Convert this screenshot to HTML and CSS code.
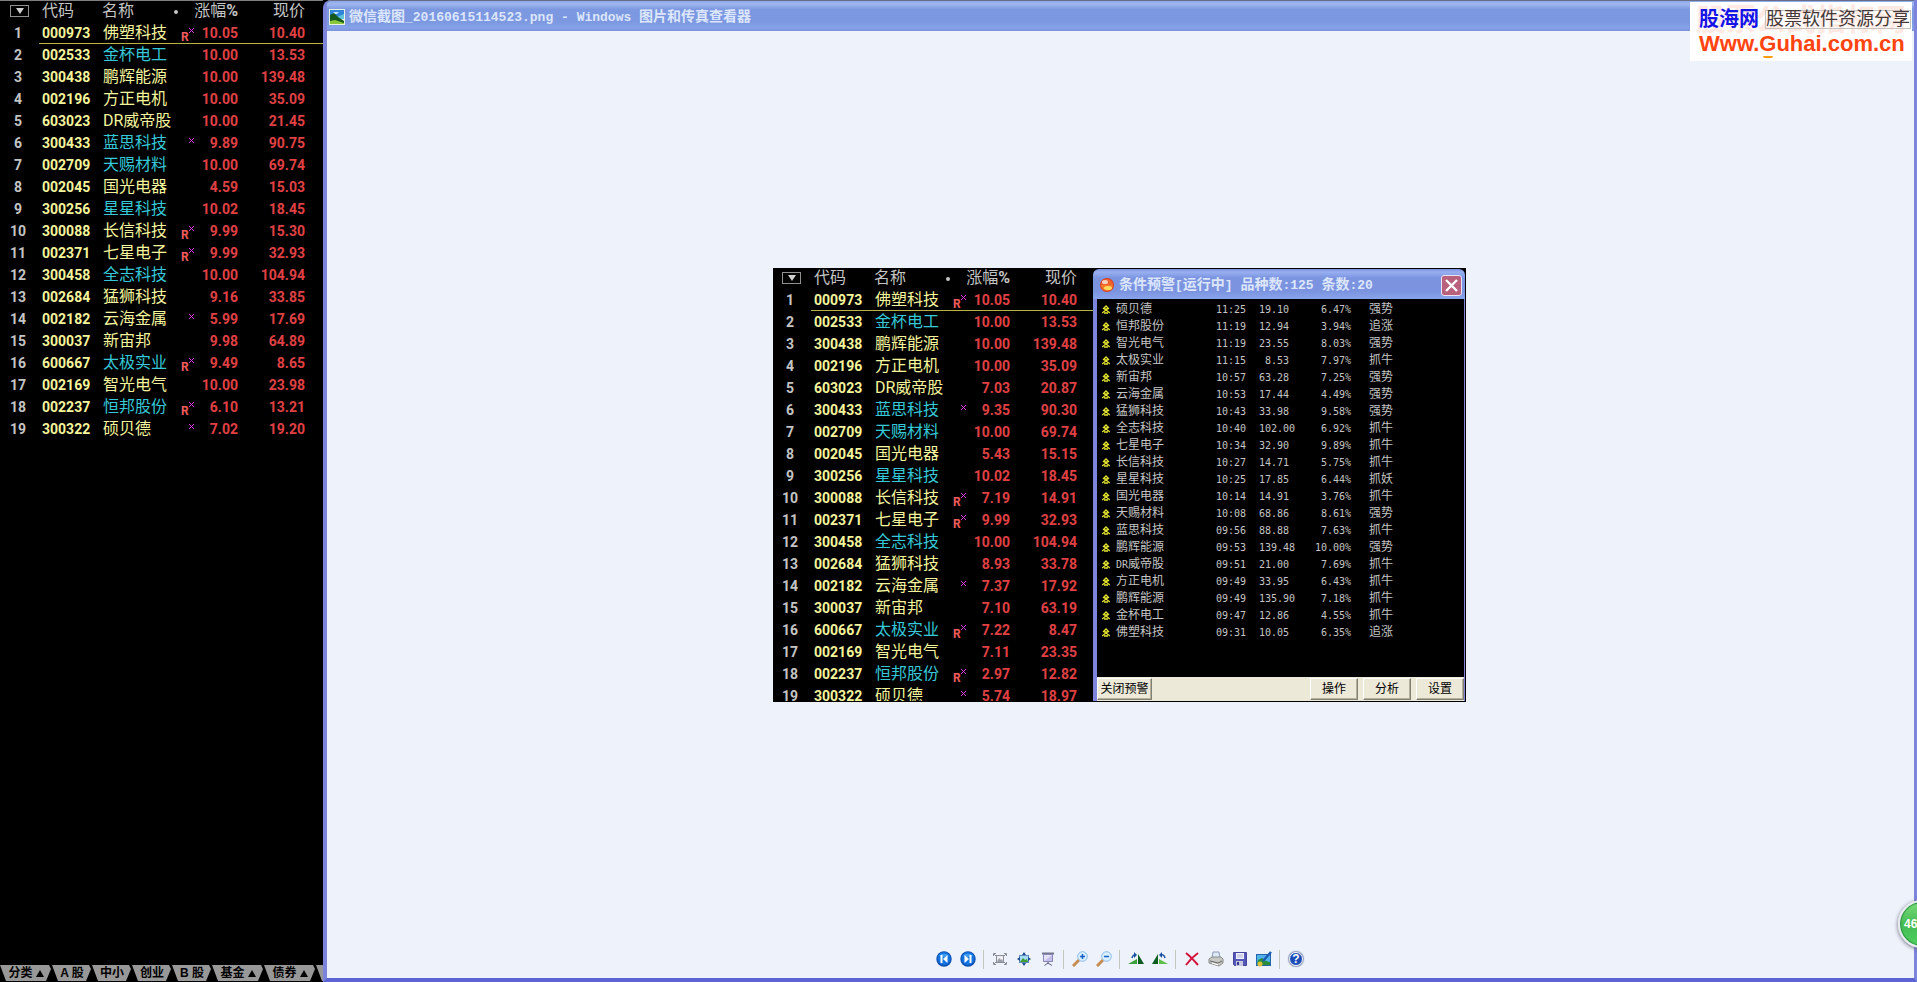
FILE: index.html
```html
<!DOCTYPE html>
<html lang="zh-CN">
<head>
    <meta charset="UTF-8">
    <meta name="viewport" content="width=device-width, initial-scale=1.0">
    <title>微信截图_20160615114523.png - Windows 图片和传真查看器</title>
    <link rel="stylesheet" href="styles.css">
</head>
<body>
    <!-- Stock list -->
    <div class="market">
        <table class="quotes" id="quotesNow"></table>
        <div class="tabs">
            <button type="button" class="tab wide">分类<i></i></button>
            <button type="button" class="tab">A 股</button>
            <button type="button" class="tab">中小</button>
            <button type="button" class="tab">创业</button>
            <button type="button" class="tab">B 股</button>
            <button type="button" class="tab wide">基金<i></i></button>
            <button type="button" class="tab wide">债券<i></i></button>
            <span class="tab-rest"></span>
        </div>
    </div>

    <!-- Picture viewer -->
    <div class="viewer">
        <div class="titlebar">
            <svg class="title-icon" width="16" height="16" viewBox="0 0 16 16">
                <rect width="16" height="16" fill="#e8f2e0"/>
                <rect x="1" y="1" width="14" height="7" fill="#2f86d8"/>
                <path d="M5 3h5l-2 2H4z" fill="#bfe4fa"/>
                <path d="M8 8l7-3v5H8z" fill="#5ec4dc"/>
                <path d="M1 6l4-2 4 4 6 4v2H1z" fill="#14591f"/>
                <path d="M1 12l5-1 9 3v1H1z" fill="#8cc63c"/>
            </svg>
            <h1>微信截图<span>_20160615114523.png - Windows </span>图片和传真查看器</h1>
        </div>

        <div class="client">
            <div class="shot">
                <div class="shot-list">
                    <table class="quotes" id="quotesShot"></table>
                </div>
                <div class="alert">
                    <div class="alert-title">
                        <svg width="14" height="14" viewBox="0 0 14 14">
                            <circle cx="7" cy="7" r="7" fill="#d8401c"/>
                            <path d="M1 7a6 6 0 0 1 12 0z" fill="#f0622c"/>
                            <path d="M1 7a6 6 0 0 0 12 0z" fill="#f47a28"/>
                            <ellipse cx="8" cy="10" rx="4" ry="2" fill="#ffd860"/>
                            <ellipse cx="5" cy="4" rx="3" ry="2" fill="#fff" opacity=".7"/>
                        </svg>
                        <h2>条件预警<span>[</span>运行中<span>] </span>品种数<span>:125 </span>条数<span>:20</span></h2>
                        <button type="button" class="close" aria-label="关闭">
                            <svg width="13" height="13" viewBox="0 0 13 13"><path d="M1 1l11 11M12 1L1 12" stroke="#fff" stroke-width="2.4"/></svg>
                        </button>
                    </div>
                    <div class="alert-body">
                        <table class="alerts" id="alerts"></table>
                    </div>
                    <div class="alert-buttons">
                        <button type="button" class="close-alert">关闭预警</button>
                        <button type="button">操作</button>
                        <button type="button">分析</button>
                        <button type="button">设置</button>
                    </div>
                </div>
            </div>
        </div>

        <div class="toolbar">
            <button type="button" aria-label="上一个">
                <svg width="16" height="16" viewBox="0 0 16 16"><circle cx="8" cy="8" r="7.7" fill="#0a4fb4"/><circle cx="8" cy="7.5" r="6.5" fill="#1474e0"/><path d="M3 5a6 5 0 0 1 10 0 9 6 0 0 1-10 0z" fill="#3c9cf0"/><path d="M5.5 4v8" stroke="#fff" stroke-width="2"/><path d="M11.5 4v8L7 8z" fill="#fff"/></svg>
            </button>
            <button type="button" aria-label="下一个">
                <svg width="16" height="16" viewBox="0 0 16 16"><circle cx="8" cy="8" r="7.7" fill="#0a4fb4"/><circle cx="8" cy="7.5" r="6.5" fill="#1474e0"/><path d="M3 5a6 5 0 0 1 10 0 9 6 0 0 1-10 0z" fill="#3c9cf0"/><path d="M10.5 4v8" stroke="#fff" stroke-width="2"/><path d="M4.5 4v8L9 8z" fill="#fff"/></svg>
            </button>
            <span class="sep"></span>
            <button type="button" aria-label="最合适">
                <svg width="16" height="16" viewBox="0 0 16 16" fill="none" stroke="#8a8e98"><path d="M1.500 5V2.500H4M12 2.500h2.500V5M1.500 11v2.500H4M12 13.500h2.500V11M2 3l2 2M14 3l-2 2M2 13l2-2M14 13l-2-2"/><rect x="4.5" y="4.5" width="7" height="7" fill="#eceef2"/><path d="M5 11l2-4 2 2 1-1 1 3z" fill="#9a9ea8" stroke="none"/></svg>
            </button>
            <button type="button" aria-label="实际大小">
                <svg width="16" height="16" viewBox="0 0 16 16"><rect x="3.5" y="4.5" width="9" height="7" fill="#a6dcf4" stroke="#5c8cc0"/><path d="M4 11l3-4 2 2 2-1 1 3z" fill="#3e9c30"/><path d="M8 1l2 3H6zM8 15l2-3H6zM1 8l3-2v4zM15 8l-3-2v4z" fill="#1c4c94"/></svg>
            </button>
            <button type="button" aria-label="幻灯片">
                <svg width="16" height="16" viewBox="0 0 16 16"><path d="M2 2.500h12" stroke="#70748c" stroke-width="2"/><rect x="3.5" y="3.5" width="9" height="7" fill="#e4e2f8" stroke="#8c88b8"/><path d="M4 10l8-6v6z" fill="#c4c0ec"/><path d="M8 11v2M4.500 14.500L8 12l4 2.500" stroke="#5c5c84" fill="none"/></svg>
            </button>
            <span class="sep"></span>
            <button type="button" aria-label="放大">
                <svg width="16" height="16" viewBox="0 0 16 16"><path d="M1 15l6-6" stroke="#c88c50" stroke-width="3"/><circle cx="10.5" cy="5.5" r="4.8" fill="#d8f0ff" stroke="#8cb8e4"/><path d="M8 5.500h5M10.500 3v5" stroke="#1860c8" stroke-width="1.5"/></svg>
            </button>
            <button type="button" aria-label="缩小">
                <svg width="16" height="16" viewBox="0 0 16 16"><path d="M1 15l6-6" stroke="#c88c50" stroke-width="3"/><circle cx="10.5" cy="5.5" r="4.8" fill="#d8f0ff" stroke="#8cb8e4"/><path d="M8 5.500h5" stroke="#1860c8" stroke-width="1.5"/></svg>
            </button>
            <span class="sep"></span>
            <button type="button" aria-label="顺时针旋转">
                <svg width="16" height="16" viewBox="0 0 16 16"><path d="M0 13l9-5v5z" fill="#3ca03c"/><path d="M10 13V3l6 10z" fill="#0c5c20"/><path d="M4 7q1-4 4-3" stroke="#1c50a0" stroke-width="1.5" fill="none"/><path d="M6 1l3 3-3 3z" fill="#1c50a0"/></svg>
            </button>
            <button type="button" aria-label="逆时针旋转">
                <svg width="16" height="16" viewBox="0 0 16 16"><path d="M16 13L7 8v5z" fill="#5cc048"/><path d="M6 13V3L0 13z" fill="#0c5c20"/><path d="M13 7q-1-4-4-3" stroke="#1c50a0" stroke-width="1.5" fill="none"/><path d="M10 1L7 4l3 3z" fill="#1c50a0"/></svg>
            </button>
            <span class="sep"></span>
            <button type="button" aria-label="删除">
                <svg width="16" height="16" viewBox="0 0 16 16"><path d="M2 2q5 4 12 12M14 2Q7 7 2 14" stroke="#d4143c" stroke-width="2" fill="none"/></svg>
            </button>
            <button type="button" aria-label="打印">
                <svg width="16" height="16" viewBox="0 0 16 16"><path d="M4 7l1-6h6l1 6z" fill="#dceafa" stroke="#8c9cb4"/><path d="M1 8l3-2h9l2 2v4l-4 3-10-3z" fill="#c8c8c4" stroke="#888884"/><path d="M2 10l8 2 4-2" stroke="#606068" fill="none"/><path d="M4 12l6 2" stroke="#fff"/></svg>
            </button>
            <button type="button" aria-label="复制到">
                <svg width="16" height="16" viewBox="0 0 16 16"><path d="M1.500 1.500h13v13h-12l-1-1z" fill="#5458b4" stroke="#4444a0"/><rect x="4" y="2" width="8" height="6" fill="#f0f2fc"/><path d="M5 4h6M5 6h6" stroke="#b0b4d4"/><rect x="4" y="10" width="7" height="5" fill="#c4c8e0"/><rect x="5" y="11" width="2" height="3" fill="#34348c"/></svg>
            </button>
            <button type="button" aria-label="编辑">
                <svg width="16" height="16" viewBox="0 0 16 16"><rect x=".5" y="3.5" width="14" height="11" fill="#50b4ec" stroke="#2464ac"/><path d="M1 14l1-5 4-2 4 3 4 1v3z" fill="#2c8c38"/><path d="M7 10l8-9" stroke="#1c5cb4" stroke-width="2.5"/><circle cx="4" cy="13" r="2.5" fill="#dcc040"/></svg>
            </button>
            <span class="sep"></span>
            <button type="button" class="help" aria-label="帮助">?</button>
        </div>
    </div>

    <!-- Site mark -->
    <div class="mark">
        <div class="ghost" aria-hidden="true">股票公式指标网</div>
        <div class="mark-top"><b>股海网</b><span>股票软件资源分享</span></div>
        <a href="#">Www.Guhai.com.cn</a>
    </div>

    <div class="ball">46</div>

    <script src="script.js"></script>
</body>
</html>
```
FILE: styles.css
```css
/* General styling */
* {
    box-sizing: border-box;
}

body {
    display: flex;
    position: relative;
    height: 100vh;
    margin: 0;
    overflow: hidden;
    background-color: #000;
    font-family: "Liberation Sans", "Noto Sans CJK SC", sans-serif;
    font-size: 12px;
}

button {
    margin: 0;
    padding: 0;
    border: none;
    background: none;
    font-family: inherit;
    font-size: 12px;
    cursor: pointer;
}

table {
    border-collapse: separate;
    border-spacing: 0;
    table-layout: fixed;
}

th,
td {
    padding: 0;
    font-weight: normal;
    text-align: left;
    white-space: nowrap;
}

/* Stock list */
.market {
    display: flex;
    flex: none;
    flex-direction: column;
    justify-content: space-between;
    width: 323px;
    border-top: 1px solid #808080;
    overflow: hidden;
}

.quotes {
    width: 323px;
    margin-top: -1px;
    color: #c4c4c4;
    font-family: Roboto, "Noto Sans CJK SC", sans-serif;
    font-size: 14px;
    font-weight: bold;
    line-height: 20px;
}

.quotes tr {
    height: 22px;
}

.quotes th {
    font-size: 16px;
}

.quotes td {
    border-bottom: 1px solid transparent;
    font-weight: bold;
}

.quotes .first td {
    border-color: #b8b440;
}

.quotes .no,
.quotes .first .no {
    width: 39px;
    padding-right: 3px;
    border-color: transparent;
    text-align: center;
}

.quotes .code {
    width: 63px;
    padding-left: 3px;
}

.quotes .name {
    width: 76px;
}

.quotes td.name {
    padding-left: 1px;
    font-size: 16px;
    font-weight: normal;
}

.quotes td.code,
.quotes td.name {
    color: #f4f49c;
}

.quotes td.blue {
    color: #34c8d8;
}

.quotes .flags {
    width: 16px;
}

.quotes .pct {
    width: 44px;
}

.quotes .price {
    width: 85px;
    padding-right: 18px;
}

.quotes .pct,
.quotes .price {
    text-align: right;
}

.quotes td.pct,
.quotes td.price {
    color: #e04044;
}

.flag {
    display: flex;
    align-items: flex-end;
    justify-content: space-between;
    height: 20px;
    padding-left: 3px;
    color: #f05c5c;
    font-size: 12px;
    line-height: 12px;
}

.flag svg {
    align-self: flex-start;
    margin: 5px 0 0 auto;
}

.dot {
    float: right;
    width: 4px;
    height: 4px;
    margin-top: 9px;
    border-radius: 2px;
    background-color: #c4c4c4;
}

.menu-button {
    display: block;
    width: 19px;
    height: 12px;
    margin: 0 0 0 10px;
    border: 1px solid #909090;
}

.menu-button i {
    display: block;
    width: 8px;
    margin: 0 auto;
    border: 4px solid transparent;
    border-top: 6px solid #d0d0d0;
    border-bottom: none;
}

/* Bottom tabs */
.tabs {
    display: flex;
    height: 17px;
}

.tab,
.tab-rest {
    flex: none;
    width: 40px;
    height: 16px;
    background-color: #989898;
    clip-path: polygon(0 0, 37px 0, 39px 4px, 34px 100%, 6px 100%);
    color: #000;
    font-weight: bold;
    line-height: 16px;
    text-align: center;
}

.tab.wide {
    width: 52px;
    clip-path: polygon(0 0, 49px 0, 51px 4px, 46px 100%, 6px 100%);
}

.tab i {
    display: inline-block;
    margin-left: 3px;
    border: 4px solid transparent;
    border-top: none;
    border-bottom: 7px solid #000;
}

/* Picture viewer */
.viewer {
    display: flex;
    flex: 1;
    flex-direction: column;
    min-width: 0;
    border: solid #7c84dc;
    border-width: 0 3px 4px 4px;
    border-bottom-color: #5c64d4;
    border-top-left-radius: 8px;
    background-color: #eef2fb;
}

.titlebar {
    display: flex;
    align-items: center;
    gap: 4px;
    height: 31px;
    padding: 2px 0 0 2px;
    border-top: 1px solid #686c84;
    border-top-left-radius: 4px;
    background: linear-gradient(#8ea8ea, #a0b8f0 10%, #7c98e0 28%, #7c98e0 70%, #86a2e8 90%, #7c90dc);
}

.titlebar h1,
.alert-title h2 {
    margin: 0;
    color: #dce6fc;
    font-family: "Liberation Mono", "Noto Sans CJK SC", monospace;
    font-size: 14px;
    line-height: 18px;
    white-space: pre;
}

.titlebar h1 span,
.alert-title h2 span {
    font-size: 13px;
}

.client {
    display: flex;
    flex: 1;
    align-items: center;
    justify-content: center;
    min-height: 0;
    padding: 0 2px 1px 0;
}

.shot {
    display: flex;
    height: 434px;
    border-right: 1px solid #000;
    border-bottom: 1px solid #000;
    background-color: #000;
}

.shot-list {
    width: 320px;
    overflow: hidden;
}

.shot-list .quotes {
    margin-left: -1px;
}

/* Alert window */
.alert {
    display: flex;
    flex-direction: column;
    width: 372px;
    padding-top: 1px;
}

.alert-title {
    display: flex;
    align-items: center;
    gap: 5px;
    height: 30px;
    padding: 2px 3px 0 7px;
    border-radius: 6px 6px 0 0;
    background: linear-gradient(#7c90dc, #98b0f0 10%, #7c94e0 30%, #7c94e0 75%, #88a4ec);
}

.close {
    display: flex;
    align-items: center;
    justify-content: center;
    width: 21px;
    height: 21px;
    margin-left: auto;
    border: 1px solid #e8e4f4;
    border-radius: 3px;
    background-color: #b8607c;
}

.alert-body {
    flex: 1;
    border: solid #7c84dc;
    border-width: 0 1px 0 4px;
}

.alerts {
    margin-top: 2px;
    color: #c4c4c4;
    font-size: 12px;
    line-height: 17px;
}

.alerts tr {
    height: 17px;
}

.alerts .up {
    width: 19px;
    padding-left: 5px;
}

.alerts .up svg {
    display: block;
}

.alerts .who {
    width: 100px;
}

.alerts .time,
.alerts .at,
.alerts .gain,
.alerts .who span {
    font-family: "DejaVu Sans Mono", monospace;
    font-size: 10px;
    white-space: pre;
}

.alerts .time {
    width: 43px;
}

.alerts .at {
    width: 50px;
}

.alerts .gain {
    width: 42px;
    text-align: right;
}

.alerts .kind {
    width: 60px;
    padding-left: 18px;
}

.alert-buttons {
    display: flex;
    gap: 5px;
    height: 24px;
    padding-top: 1px;
    border-left: 4px solid #7c84dc;
    border-right: 1px solid #7c84dc;
    background-color: #ece9d8;
}

.alert-buttons button {
    width: 48px;
    height: 22px;
    border: 1px solid;
    border-color: #fff #808074 #808074 #fff;
    box-shadow: inset -1px -1px #b4b09c;
    background-color: #ece9d8;
    color: #000;
    line-height: 18px;
}

.alert-buttons .close-alert {
    width: 55px;
    margin-right: auto;
}

/* Viewer toolbar */
.toolbar {
    display: flex;
    flex: none;
    align-items: center;
    justify-content: center;
    height: 38px;
    padding-right: 1px;
}

.toolbar button {
    display: flex;
    align-items: center;
    justify-content: center;
    width: 24px;
    height: 24px;
}

.sep {
    width: 1px;
    height: 19px;
    margin: 0 4px 0 3px;
    background-color: #c4c8bc;
}

.toolbar .help {
    width: 14px;
    height: 14px;
    margin: 0 5px;
    border: 1px solid #f8faff;
    border-radius: 7px;
    box-shadow: 0 0 1px 1px #8c98b8;
    background-color: #1c4cb8;
    color: #fff;
    font-weight: bold;
}

/* Site mark */
.mark {
    position: absolute;
    top: 2px;
    right: 5px;
    width: 222px;
    height: 59px;
    padding: 4px 0 0 9px;
    background-color: #fff;
    white-space: nowrap;
    overflow: hidden;
}

.ghost {
    position: absolute;
    top: 0;
    left: 6px;
    color: #ffe9e2;
    font-size: 30px;
    font-weight: bold;
    line-height: 36px;
}

.mark-top {
    display: flex;
    position: relative;
    align-items: center;
    gap: 6px;
    height: 26px;
}

.mark-top b {
    color: #1414e8;
    font-size: 20px;
    line-height: 26px;
}

.mark-top span {
    border: 1px solid #c8c0bc;
    color: #443838;
    font-size: 18px;
    line-height: 17px;
}

.mark a {
    position: relative;
    color: #ff4410;
    font-size: 22px;
    font-weight: bold;
    line-height: 24px;
    text-decoration: none;
}

.mark::after {
    content: "";
    position: absolute;
    bottom: 3px;
    left: 73px;
    width: 10px;
    height: 2px;
    border-radius: 0 0 5px 5px;
    background-color: #ff9c10;
}

/* Floating ball */
.ball {
    position: absolute;
    right: -29px;
    bottom: 34px;
    width: 48px;
    height: 48px;
    padding-left: 4px;
    border: 2px solid #e8ecf0;
    border-radius: 24px;
    box-shadow: 0 1px 4px #667, inset 0 0 1px 1px #2c8c44;
    background: linear-gradient(#7cdc7c, #44bc54 50%, #50d060);
    color: #fff;
    font-size: 12px;
    font-weight: bold;
    line-height: 44px;
}
```
FILE: script.js
```js
// code, name, flags, pct, price, then pct and price in the earlier list
const stocks = [
    ['000973', '佛塑科技', 'Rx', '10.05', '10.40', '10.05', '10.40'],
    ['002533', '金杯电工', '', '10.00', '13.53', '10.00', '13.53'],
    ['300438', '鹏辉能源', '', '10.00', '139.48', '10.00', '139.48'],
    ['002196', '方正电机', '', '10.00', '35.09', '10.00', '35.09'],
    ['603023', 'DR威帝股', '', '10.00', '21.45', '7.03', '20.87'],
    ['300433', '蓝思科技', 'x', '9.89', '90.75', '9.35', '90.30'],
    ['002709', '天赐材料', '', '10.00', '69.74', '10.00', '69.74'],
    ['002045', '国光电器', '', '4.59', '15.03', '5.43', '15.15'],
    ['300256', '星星科技', '', '10.02', '18.45', '10.02', '18.45'],
    ['300088', '长信科技', 'Rx', '9.99', '15.30', '7.19', '14.91'],
    ['002371', '七星电子', 'Rx', '9.99', '32.93', '9.99', '32.93'],
    ['300458', '全志科技', '', '10.00', '104.94', '10.00', '104.94'],
    ['002684', '猛狮科技', '', '9.16', '33.85', '8.93', '33.78'],
    ['002182', '云海金属', 'x', '5.99', '17.69', '7.37', '17.92'],
    ['300037', '新宙邦', '', '9.98', '64.89', '7.10', '63.19'],
    ['600667', '太极实业', 'Rx', '9.49', '8.65', '7.22', '8.47'],
    ['002169', '智光电气', '', '10.00', '23.98', '7.11', '23.35'],
    ['002237', '恒邦股份', 'Rx', '6.10', '13.21', '2.97', '12.82'],
    ['300322', '硕贝德', 'x', '7.02', '19.20', '5.74', '18.97']
];

const blue = ['002533', '300433', '002709', '300256', '300458', '600667', '002237'];

const alerts = [
    ['硕贝德', '11:25', '19.10', '6.47%', '强势'],
    ['恒邦股份', '11:19', '12.94', '3.94%', '追涨'],
    ['智光电气', '11:19', '23.55', '8.03%', '强势'],
    ['太极实业', '11:15', ' 8.53', '7.97%', '抓牛'],
    ['新宙邦', '10:57', '63.28', '7.25%', '强势'],
    ['云海金属', '10:53', '17.44', '4.49%', '强势'],
    ['猛狮科技', '10:43', '33.98', '9.58%', '强势'],
    ['全志科技', '10:40', '102.00', '6.92%', '抓牛'],
    ['七星电子', '10:34', '32.90', '9.89%', '抓牛'],
    ['长信科技', '10:27', '14.71', '5.75%', '抓牛'],
    ['星星科技', '10:25', '17.85', '6.44%', '抓妖'],
    ['国光电器', '10:14', '14.91', '3.76%', '抓牛'],
    ['天赐材料', '10:08', '68.86', '8.61%', '强势'],
    ['蓝思科技', '09:56', '88.88', '7.63%', '抓牛'],
    ['鹏辉能源', '09:53', '139.48', '10.00%', '强势'],
    ['<span>DR</span>威帝股', '09:51', '21.00', '7.69%', '抓牛'],
    ['方正电机', '09:49', '33.95', '6.43%', '抓牛'],
    ['鹏辉能源', '09:49', '135.90', '7.18%', '抓牛'],
    ['金杯电工', '09:47', '12.86', '4.55%', '抓牛'],
    ['佛塑科技', '09:31', '10.05', '6.35%', '追涨']
];

const cross = '<svg width="5" height="5" viewBox="0 0 5 5"><path d="M0 0l5 5M5 0L0 5" stroke="#d83cd8"/></svg>';
const arrow = '<svg width="8" height="9" viewBox="0 0 8 9"><path d="M1 4l3-3 3 3M0 8l4-3 4 3M2 4h4M2 8h4" fill="none" stroke="#e4e430" stroke-width="1.3"/></svg>';

function fillQuotes(id, col) {
    let html = '<tr><th class="no"><button type="button" class="menu-button" aria-label="菜单"><i></i></button></th>' +
        '<th class="code">代码</th><th class="name">名称<span class="dot"></span></th><th class="flags"></th>' +
        '<th class="pct">涨幅<b>%</b></th><th class="price">现价</th></tr>';
    stocks.forEach(function(s, i) {
        const flags = s[2] ? '<div class="flag">' + (s[2] === 'Rx' ? 'R' : '') + cross + '</div>' : '';
        html += '<tr' + (i === 0 ? ' class="first"' : '') + '><td class="no">' + (i + 1) + '</td>' +
            '<td class="code">' + s[0] + '</td>' +
            '<td class="name' + (blue.includes(s[0]) ? ' blue' : '') + '">' + s[1] + '</td>' +
            '<td class="flags">' + flags + '</td>' +
            '<td class="pct">' + s[col] + '</td><td class="price">' + s[col + 1] + '</td></tr>';
    });
    document.getElementById(id).innerHTML = html;
}

fillQuotes('quotesNow', 3);
fillQuotes('quotesShot', 5);

document.getElementById('alerts').innerHTML = alerts.map(function(a) {
    return '<tr><td class="up">' + arrow + '</td><td class="who">' + a[0] + '</td><td class="time">' + a[1] +
        '</td><td class="at">' + a[2] + '</td><td class="gain">' + a[3] + '</td><td class="kind">' + a[4] + '</td></tr>';
}).join('');
```
